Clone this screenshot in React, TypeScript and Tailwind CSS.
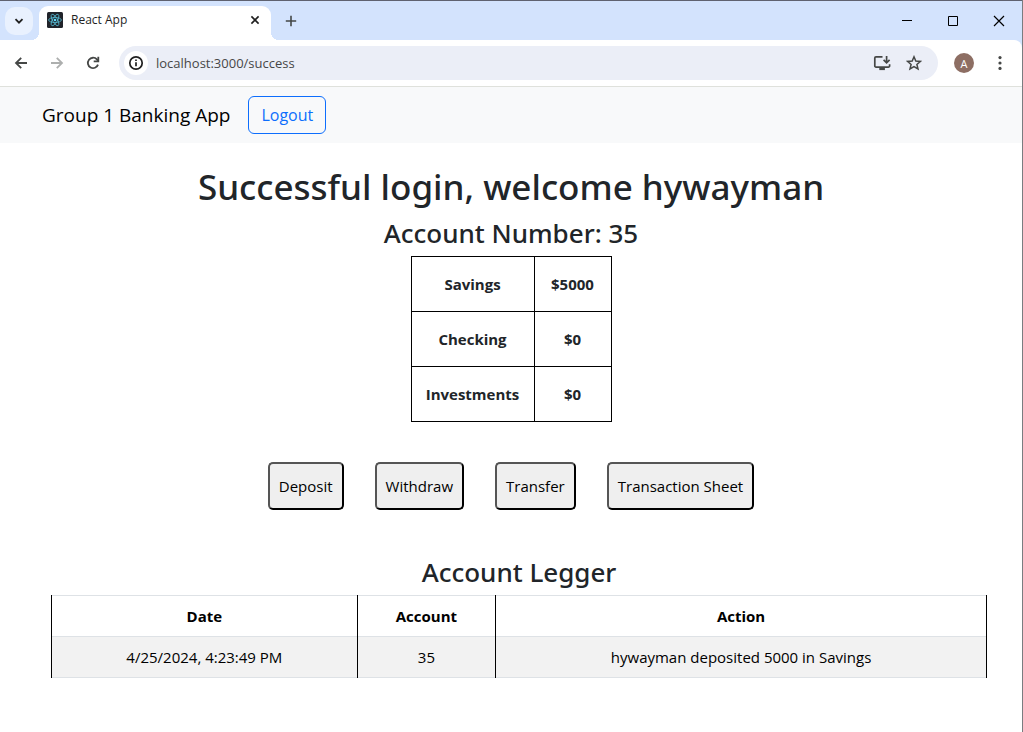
import type { ReactNode } from "react";

const balances = [
  { name: "Savings", amount: "$5000" },
  { name: "Checking", amount: "$0" },
  { name: "Investments", amount: "$0" },
];

const ledger = [
  { date: "4/25/2024, 4:23:49 PM", account: "35", action: "hywayman deposited 5000 in Savings" },
];

function ReactLogo() {
  return (
    <svg viewBox="0 0 16 16" className="size-4 shrink-0" aria-hidden="true">
      <rect width="16" height="16" rx="1.5" fill="#20232a" />
      <g fill="none" stroke="#53b9d1" strokeWidth="0.8">
        <ellipse cx="8" cy="8" rx="6.4" ry="2.5" />
        <ellipse cx="8" cy="8" rx="6.4" ry="2.5" transform="rotate(60 8 8)" />
        <ellipse cx="8" cy="8" rx="6.4" ry="2.5" transform="rotate(120 8 8)" />
      </g>
      <circle cx="8" cy="8" r="1.3" fill="#61dafb" />
    </svg>
  );
}

function Glyph({ d, className, label, width = 1.8 }: { d: string; className: string; label: string; width?: number }) {
  return (
    <button type="button" aria-label={label} className={className}>
      <svg viewBox="0 0 16 16" className="size-4" fill="none" stroke="currentColor" strokeWidth={width}>
        <path d={d} />
      </svg>
    </button>
  );
}

function TabStrip() {
  return (
    <div className="flex h-10 items-center border-t border-[#5f6270] bg-[#d3e3fd] text-[#1f1f1f]">
      <Glyph
        label="Search tabs"
        d="M4.5 6.2 8 9.7l3.5-3.5"
        className="ml-[5px] flex size-7 items-center justify-center rounded-[10px] bg-[#e9f1fe]"
      />
      <div className="relative ml-[6px] mt-[5px] flex h-[34px] w-[232px] items-center rounded-t-[9px] bg-white pb-[6px] pl-2 pr-2 before:absolute before:-left-2 before:bottom-0 before:size-2 before:bg-[radial-gradient(circle_at_0_0,#d3e3fd_8px,#fff_8px)] after:absolute after:-right-2 after:bottom-0 after:size-2 after:bg-[radial-gradient(circle_at_100%_0,#d3e3fd_8px,#fff_8px)]">
        <ReactLogo />
        <span className="ml-2 flex-1 text-[12px] leading-4">React App</span>
        <Glyph label="Close tab" d="M4.4 4.4l7.2 7.2M11.6 4.4l-7.2 7.2" width={1.6} className="flex size-4 items-center justify-center" />
      </div>
      <Glyph label="New tab" d="M8 2.8v10.4M2.8 8h10.4" width={1.6} className="ml-3 flex size-4 items-center justify-center text-[#444746]" />
      <div className="ml-auto flex items-center gap-[30px] pr-[15px] text-black">
        <Glyph label="Minimize" d="M3 7.5h10" width={1} className="flex size-4" />
        <Glyph label="Maximize" d="M3.5 3.5h9v9h-9z" width={1} className="flex size-4" />
        <Glyph label="Close" d="M3 3l10 10M13 3 3 13" width={1.2} className="flex size-4" />
      </div>
    </div>
  );
}

function Toolbar() {
  return (
    <div className="flex h-[47px] items-center rounded-tr-lg border-b border-[#dfe1dc] bg-white pl-[13px] pr-[14px] text-[#454746]">
      <Glyph label="Back" d="M14 8H3M8.2 2.8 3 8l5.2 5.2" className="flex size-4" />
      <Glyph label="Forward" d="M2 8h11M7.8 2.8 13 8l-5.2 5.2" className="ml-5 flex size-4 text-[#adafae]" />
      <button type="button" aria-label="Reload" className="ml-5">
        <svg viewBox="0 0 16 16" className="size-4" fill="none" stroke="currentColor" strokeWidth="1.8">
          <path d="M13 9.6A5.2 5.2 0 1 1 11.9 4.4L13 5.6" />
          <path d="M13.3 1.8v4.6H8.7" />
        </svg>
      </button>
      <div className="ml-[18px] flex h-[34px] min-w-0 flex-1 items-center rounded-full bg-[#ebeef7] pl-[5px] pr-4">
        <button type="button" aria-label="Site information" className="flex size-6 items-center justify-center rounded-full bg-white text-[#1f1f1f]">
          <svg viewBox="0 0 16 16" className="size-4" fill="none" stroke="currentColor" strokeWidth="1.7">
            <circle cx="8" cy="8" r="6.2" />
            <path d="M8 7.2v4M8 4.4v1.7" />
          </svg>
        </button>
        <input
          aria-label="Address"
          defaultValue="localhost:3000/success"
          className="ml-2 min-w-0 flex-1 bg-transparent text-[13px] leading-5 text-[#474747] outline-none"
        />
        <button type="button" aria-label="Install app" className="mr-[15px]">
          <svg viewBox="0 0 18 16" className="h-4 w-[18px]" fill="none" stroke="currentColor" strokeWidth="1.7">
            <path d="M9.5 1.9H3a1.2 1.2 0 0 0-1.2 1.2v7.8A1.2 1.2 0 0 0 3 12.1h12.4a1.2 1.2 0 0 0 1.2-1.2V9.3" />
            <path d="M13.6 1v6.5M10.6 4.8l3 3 3-3" />
            <path d="M6.3 13.8h5.6" strokeWidth="2.6" />
          </svg>
        </button>
        <button type="button" aria-label="Bookmark this page">
          <svg viewBox="0 0 16 16" className="size-4" fill="none" stroke="currentColor" strokeWidth="1.5">
            <path d="M8 1.8 9.8 6l4.6.4-3.5 3 1.1 4.5L8 11.5l-4 2.4 1.1-4.5-3.5-3L6.2 6z" />
          </svg>
        </button>
      </div>
      <button type="button" aria-label="Profile" className="ml-4 flex size-5 items-center justify-center rounded-full bg-[#8d6e63] text-[11px] leading-none text-white">
        A
      </button>
      <button type="button" aria-label="Menu" className="ml-[18px]">
        <svg viewBox="0 0 16 16" className="size-4" fill="currentColor">
          <circle cx="8" cy="2.6" r="1.6" />
          <circle cx="8" cy="8" r="1.6" />
          <circle cx="8" cy="13.4" r="1.6" />
        </svg>
      </button>
    </div>
  );
}

function ActionButton({ children }: { children: ReactNode }) {
  return (
    <button
      type="button"
      className="h-12 rounded-[5px] border-2 border-b-black border-l-[#555] border-r-black border-t-[#555] bg-[#efefef] px-[9px] text-[15px] text-black"
    >
      {children}
    </button>
  );
}

export default function App() {
  return (
    <div className="min-h-screen border-r border-[#7a7c80] bg-white font-['Open_Sans','Noto_Sans',sans-serif] text-[#212529]">
      <header>
        <div className="bg-[#d3e3fd]">
          <TabStrip />
          <Toolbar />
        </div>
        <nav className="flex h-14 items-center gap-[18px] bg-[#f8f9fa] px-[42px]">
          <a href="#home" className="text-[19px] text-black">Group 1 Banking App</a>
          <button type="button" className="h-[38px] rounded-md border border-[#0d6efd] px-3 text-[16px] text-[#0d6efd]">Logout</button>
        </nav>
      </header>
      <main className="pt-5">
        <h1 className="mb-[6px] text-center font-['Noto_Sans','Open_Sans',sans-serif] text-[35px] font-medium leading-[48px]">Successful login, welcome hywayman</h1>
        <h2 className="mb-[6px] text-center font-['Noto_Sans','Open_Sans',sans-serif] text-[26px] font-medium leading-[33px]">Account Number: 35</h2>
        <table className="mx-auto border-collapse text-center text-[15px] font-bold">
          <tbody>
            {balances.map((row) => (
              <tr key={row.name} className="h-[55px]">
                <th scope="row" className="w-[123px] border border-black">{row.name}</th>
                <td className="w-[77px] border border-black">{row.amount}</td>
              </tr>
            ))}
          </tbody>
        </table>
        <div className="mt-10 flex justify-center gap-[31px]">
          <ActionButton>Deposit</ActionButton>
          <ActionButton>Withdraw</ActionButton>
          <ActionButton>Transfer</ActionButton>
          <ActionButton>Transaction Sheet</ActionButton>
        </div>
        <section className="ml-[51px] mr-[35px] mt-[46px]">
          <h2 className="mb-[6px] text-center font-['Noto_Sans','Open_Sans',sans-serif] text-[26px] font-medium leading-[33px]">Account Legger</h2>
          <table className="w-full table-fixed border-collapse text-center text-[15px] text-black">
            <colgroup>
              <col className="w-[32.7%]" />
              <col className="w-[14.8%]" />
              <col />
            </colgroup>
            <thead>
              <tr className="h-[41px] border-y border-y-[#dee2e6]">
                <th className="border-x border-x-black">Date</th>
                <th className="border-x border-x-black">Account</th>
                <th className="border-x border-x-black">Action</th>
              </tr>
            </thead>
            <tbody>
              {ledger.map((entry) => (
                <tr key={entry.date} className="h-[41px] border-y border-y-[#dee2e6] bg-[#f2f2f2]">
                  <td className="border-x border-x-black">{entry.date}</td>
                  <td className="border-x border-x-black">{entry.account}</td>
                  <td className="border-x border-x-black">{entry.action}</td>
                </tr>
              ))}
            </tbody>
          </table>
        </section>
      </main>
    </div>
  );
}
